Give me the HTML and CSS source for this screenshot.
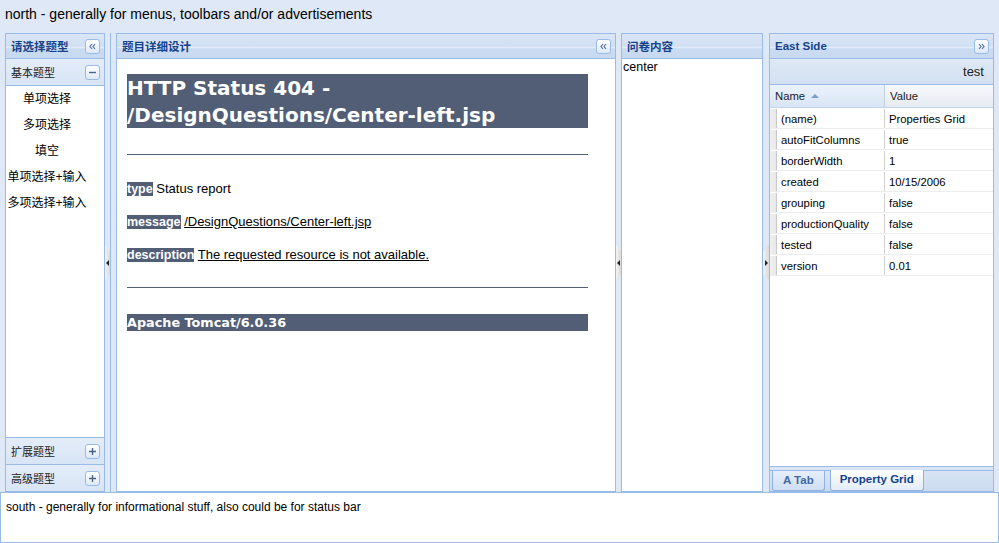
FILE: index.html
```html
<!DOCTYPE html>
<html lang="zh">
<head>
    <meta charset="utf-8">
    <title>题目设计</title>
    <link rel="stylesheet" href="styles.css">
</head>
<body>
    <div class="north">north - generally for menus, toolbars and/or advertisements</div>

    <div class="middle">
        <div class="panel west">
            <div class="panel-hd">
                <span class="title">请选择题型</span>
                <span class="tool"><svg width="13" height="13" viewBox="0 0 13 13"><path d="M6 4 L4 6.5 L6 9 M9 4 L7 6.5 L9 9" fill="none" stroke="#4f73a8" stroke-width="1.2"/></svg></span>
            </div>
            <div class="acc-hd">
                <span>基本题型</span>
                <span class="tool"><svg width="13" height="13" viewBox="0 0 13 13"><path d="M3 6.5 H10" stroke="#4a6389" stroke-width="1.4"/></svg></span>
            </div>
            <div class="acc-body">
                <div class="item">单项选择</div>
                <div class="item">多项选择</div>
                <div class="item">填空</div>
                <div class="item">单项选择+输入</div>
                <div class="item">多项选择+输入</div>
            </div>
            <div class="acc-hd closed">
                <span>扩展题型</span>
                <span class="tool"><svg width="13" height="13" viewBox="0 0 13 13"><path d="M3 6.5 H10 M6.5 3 V10" stroke="#4a6389" stroke-width="1.4"/></svg></span>
            </div>
            <div class="acc-hd closed">
                <span>高级题型</span>
                <span class="tool"><svg width="13" height="13" viewBox="0 0 13 13"><path d="M3 6.5 H10 M6.5 3 V10" stroke="#4a6389" stroke-width="1.4"/></svg></span>
            </div>
        </div>

        <div class="split"><div class="mini"><span class="arrow-l"></span></div></div>

        <div class="center-wrap">
            <div class="panel design">
                <div class="panel-hd">
                    <span class="title">题目详细设计</span>
                    <span class="tool"><svg width="13" height="13" viewBox="0 0 13 13"><path d="M6 4 L4 6.5 L6 9 M9 4 L7 6.5 L9 9" fill="none" stroke="#4f73a8" stroke-width="1.2"/></svg></span>
                </div>
                <div class="panel-body tomcat">
                    <h1>HTTP Status 404 - /DesignQuestions/Center-left.jsp</h1>
                    <hr>
                    <p><b>type</b> Status report</p>
                    <p><b>message</b> <u>/DesignQuestions/Center-left.jsp</u></p>
                    <p><b>description</b> <u>The requested resource is not available.</u></p>
                    <hr class="last">
                    <h3>Apache Tomcat/6.0.36</h3>
                </div>
            </div>

            <div class="split"><div class="mini"><span class="arrow-l"></span></div></div>

            <div class="panel survey">
                <div class="panel-hd">
                    <span class="title">问卷内容</span>
                </div>
                <div class="panel-body plain">center</div>
            </div>
        </div>

        <div class="split east-split"><div class="mini"><span class="arrow-r"></span></div></div>

        <div class="panel east">
            <div class="panel-hd">
                <span class="title">East Side</span>
                <span class="tool"><svg width="13" height="13" viewBox="0 0 13 13"><path d="M4 4 L6 6.5 L4 9 M7 4 L9 6.5 L7 9" fill="none" stroke="#4f73a8" stroke-width="1.2"/></svg></span>
            </div>
            <div class="toolbar">test</div>
            <div class="grid">
                <div class="grid-hd">
                    <div class="hd-name">Name <span class="sort"></span></div>
                    <div class="hd-value">Value</div>
                </div>
                <div class="grid-row"><div class="c-name">(name)</div><div class="c-value">Properties Grid</div></div>
                <div class="grid-row"><div class="c-name">autoFitColumns</div><div class="c-value">true</div></div>
                <div class="grid-row"><div class="c-name">borderWidth</div><div class="c-value">1</div></div>
                <div class="grid-row"><div class="c-name">created</div><div class="c-value">10/15/2006</div></div>
                <div class="grid-row"><div class="c-name">grouping</div><div class="c-value">false</div></div>
                <div class="grid-row"><div class="c-name">productionQuality</div><div class="c-value">false</div></div>
                <div class="grid-row"><div class="c-name">tested</div><div class="c-value">false</div></div>
                <div class="grid-row"><div class="c-name">version</div><div class="c-value">0.01</div></div>
            </div>
            <div class="tabbar">
                <div class="tabstrip">
                    <div class="tab">A Tab</div>
                    <div class="tab active">Property Grid</div>
                </div>
            </div>
        </div>
    </div>

    <div class="south">south - generally for informational stuff, also could be for status bar</div>
</body>
</html>
```

FILE: styles.css
```css
* {
    box-sizing: border-box;
}
body {
    margin: 0;
    width: 999px;
    height: 543px;
    overflow: hidden;
    background: #dfe8f6;
    font-family: "Liberation Sans", "Noto Sans CJK SC", sans-serif;
    color: #000;
}

.north {
    height: 33px;
    padding: 6px 0 0 5px;
    font-size: 14px;
    line-height: 17px;
}

.middle {
    display: flex;
    height: 459px;
    padding: 0 5px;
}

.panel {
    display: flex;
    flex-direction: column;
    border: 1px solid #99bbe8;
    background: #fff;
    height: 100%;
}
.panel-hd {
    display: flex;
    align-items: center;
    justify-content: space-between;
    height: 25px;
    flex: none;
    padding: 0 4px 0 5px;
    border-bottom: 1px solid #99bbe8;
    background: linear-gradient(to bottom, #dae6f6 0%, #d1dff3 50%, #e3ecf9 56%, #cbdbf1 62%, #c8d9f0 100%);
    color: #15428b;
    font-size: 11px;
    font-weight: bold;
}
.title {
    font-size: 11.5px;
}
.tool {
    display: flex;
    width: 15px;
    height: 15px;
    padding: 0;
    border: 1px solid #99bbe8;
    border-radius: 3px;
    background: linear-gradient(to bottom, #ffffff, #dde8f7);
}

.west {
    width: 100px;
}
.acc-hd {
    display: flex;
    align-items: center;
    justify-content: space-between;
    height: 27px;
    flex: none;
    padding: 0 4px 0 5px;
    border-bottom: 1px solid #99bbe8;
    background: linear-gradient(to bottom, #e4ecf8, #d8e5f6);
    color: #222;
    font-size: 11px;
}
.acc-hd.closed {
    border-bottom: none;
    border-top: 1px solid #99bbe8;
}
.acc-body {
    flex: 1;
    padding-right: 16px;
    text-align: center;
    font-size: 12px;
}
.item {
    height: 26px;
    line-height: 26px;
    white-space: nowrap;
}

.split {
    width: 5px;
    display: flex;
    align-items: center;
}
.east-split {
    width: 6px;
}
.mini {
    width: 100%;
    height: 36px;
    display: flex;
    align-items: center;
    justify-content: center;
    background: linear-gradient(to right, #f3f3f3, #dadada);
    clip-path: polygon(0 0, 100% 7px, 100% calc(100% - 7px), 0 100%);
}
.east-split .mini {
    clip-path: polygon(0 7px, 100% 0, 100% 100%, 0 calc(100% - 7px));
}
.arrow-l {
    width: 0;
    height: 0;
    border-top: 3px solid transparent;
    border-bottom: 3px solid transparent;
    border-right: 3px solid #222;
}
.arrow-r {
    width: 0;
    height: 0;
    border-top: 3px solid transparent;
    border-bottom: 3px solid transparent;
    border-left: 3px solid #222;
}

.center-wrap {
    display: flex;
    border-left: 1px solid #99bbe8;
    padding-left: 5px;
}
.design {
    width: 500px;
}
.survey {
    width: 142px;
}
.panel-body {
    flex: 1;
    overflow: hidden;
}
.plain {
    padding: 1px 0 0 1px;
    font-size: 12.5px;
    line-height: 15px;
}

.tomcat {
    padding: 15px 0 0 10px;
    font-size: 13px;
}
.tomcat h1 {
    width: 461px;
    margin: 0;
    padding-top: 1px;
    height: 54px;
    background: #525d76;
    color: #fff;
    font-family: "DejaVu Sans", sans-serif;
    font-size: 20px;
    line-height: 27px;
}
.tomcat hr {
    width: 461px;
    height: 1px;
    margin: 26px 0 0;
    border: 0;
    background: #525d76;
}
.tomcat hr.last {
    margin-top: 25px;
}
.tomcat p {
    height: 15px;
    margin: 18px 0 0;
    line-height: 15px;
}
.tomcat hr + p {
    margin-top: 26px;
}
.tomcat b {
    background: #525d76;
    color: #fff;
    font-size: 12.5px;
    line-height: 15px;
}
.tomcat h3 {
    width: 461px;
    height: 17px;
    margin: 26px 0 0;
    background: #525d76;
    color: #fff;
    font-family: "DejaVu Sans", sans-serif;
    font-size: 12.8px;
    line-height: 17px;
}

.east {
    width: 225px;
}
.toolbar {
    height: 26px;
    flex: none;
    padding: 0 9px 0 0;
    border-bottom: 1px solid #99bbe8;
    background: linear-gradient(to bottom, #dfe9f6, #d3e0f1);
    text-align: right;
    font-size: 13px;
    line-height: 25px;
    color: #222;
}
.grid {
    flex: 1;
    font-size: 11.3px;
}
.grid-hd {
    display: flex;
    height: 23px;
    border-bottom: 1px solid #c5d3e6;
    line-height: 22px;
    color: #222;
}
.hd-name {
    width: 115px;
    padding-left: 5px;
    border-right: 1px solid #c5cedb;
    background: linear-gradient(to bottom, #ebf2fc, #d9e5f5);
}
.hd-value {
    flex: 1;
    padding-left: 5px;
    background: linear-gradient(to bottom, #f7f9fc, #e6ebf2);
}
.sort {
    display: inline-block;
    margin-left: 3px;
    vertical-align: 2px;
    border-left: 4px solid transparent;
    border-right: 4px solid transparent;
    border-bottom: 4px solid #7d9bc7;
}
.grid-row {
    display: flex;
    height: 21px;
    border-top: 1px solid #fff;
    border-bottom: 1px solid #ededed;
    line-height: 20px;
}
.c-name {
    width: 115px;
    padding-left: 11px;
    border-right: 1px solid #d0d0d0;
    background: linear-gradient(to right, #f0f0f0 0, #e8e8e8 6px, #c9c9c9 6px, #c9c9c9 7px, #fff 7px);
}
.c-value {
    flex: 1;
    padding-left: 4px;
}

.tabbar {
    height: 25px;
    flex: none;
    padding-top: 3px;
    border-top: 1px solid #99bbe8;
    background: linear-gradient(to bottom, #dbe6f5, #cbdbf0);
}
.tabstrip {
    display: flex;
    gap: 4px;
    height: 21px;
    padding-left: 2px;
    border-top: 1px solid #99bbe8;
}
.tab {
    height: 20px;
    padding: 0 10px;
    border: 1px solid #8db2e3;
    border-top: none;
    border-radius: 0 0 3px 3px;
    background: linear-gradient(to bottom, #e6eefa, #d0dff3);
    color: #416aa3;
    font-size: 11.5px;
    font-weight: bold;
    line-height: 19px;
}
.tab.active {
    margin-top: -1px;
    height: 21px;
    padding: 0 9px;
    margin-left: 1px;
    background: linear-gradient(to bottom, #ffffff, #e3ecf9);
    color: #15428b;
}

.south {
    height: 51px;
    padding: 7px 0 0 5px;
    border: 1px solid #99bbe8;
    background: #fff;
    font-size: 12px;
    line-height: 15px;
}
```
